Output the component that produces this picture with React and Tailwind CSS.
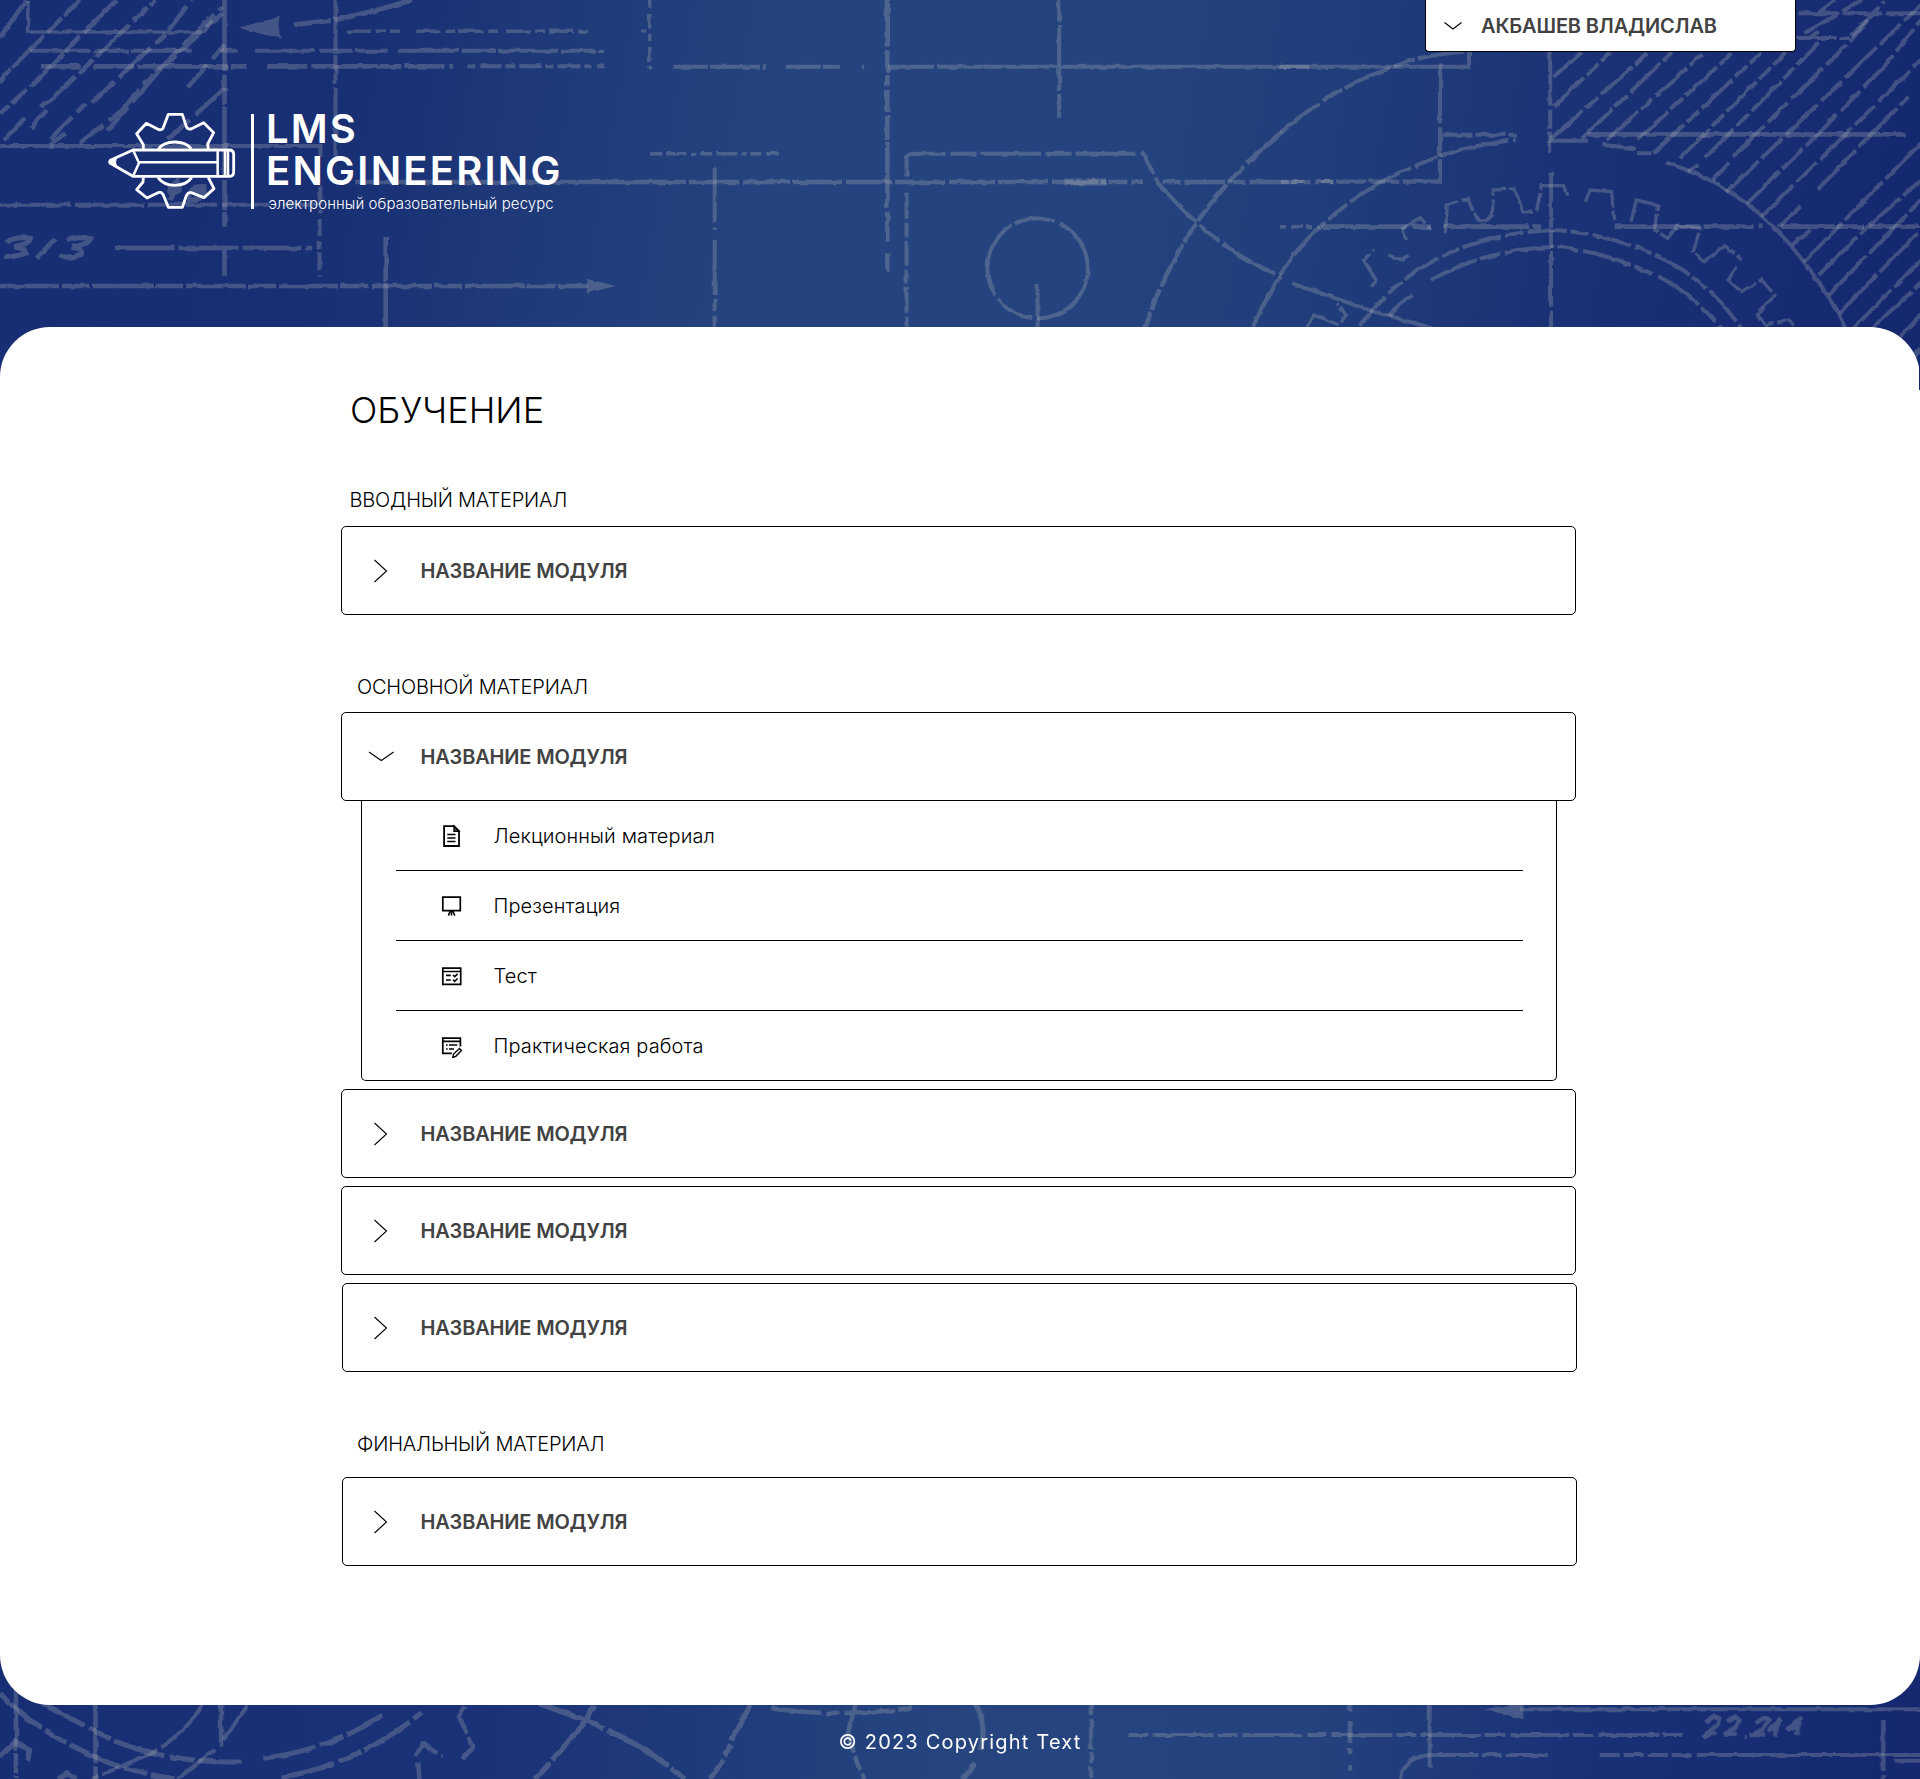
import React from "react";

function Line({ d, w = 4.6, dash }) {
  return (
    <path d={d} strokeWidth={w} strokeDasharray={dash} vectorEffect="non-scaling-stroke" />
  );
}

function Rough({ id }) {
  return (
    <filter id={id} x="-5%" y="-5%" width="110%" height="110%">
      <feTurbulence type="fractalNoise" baseFrequency="0.09" numOctaves="2" seed="4" />
      <feDisplacementMap in="SourceGraphic" scale="3.5" xChannelSelector="R" yChannelSelector="G" />
    </filter>
  );
}

function HeaderDrawing() {
  return (
    <svg className="absolute left-0 top-0" width="1920" height="390" viewBox="0 0 1920 390">
      <defs>
        <Rough id="rough-top" />
      </defs>
      <g filter="url(#rough-top)" fill="none" stroke="#b9bdb8" strokeOpacity="0.27">
        <g transform="scale(0.40816 0.33333)">
          <Line d="M65 0 L0 112 M30 205 L195 0 M0 245 L25 205 M285 0 L75 260 L0 340 M100 320 L130 295 L380 0 M75 385 L115 330" w={4.5} dash="46 5 20 4" />
          <Line d="M10 420 L60 355 M125 415 L210 310 M225 310 L410 95 L470 0 M120 435 L160 400 M265 390 L395 205 L545 40 M410 420 L550 265 M195 430 L300 330 L350 255 L545 20 M460 262 L550 135" w={4.5} dash="30 7 44 6 14 5" />
          <Line d="M68 0 V96 H500 L520 60" w={3.5} />
          <Line d="M75 152 H470 M540 152 H580 M625 152 H950 M975 152 H1480" w={4} dash="60 4 34 2" />
          <Line d="M100 199 H205 M230 199 H605 M655 199 H1110" dash="40 4 90 3" />
          <Line d="M1145 199 H1480" w={4} dash="8 5 22 4" />
          <Line d="M850 94 H980 M1020 94 H1220 M1240 94 H1450" w={3.5} dash="24 5 10 4" />
          <Line d="M1010 0 L920 32 L820 60 L720 74" w={5} dash="80 4" />
          <path d="M580 84 L685 50 L682 75 L690 116 Z" fill="#b9bdb8" fillOpacity="0.27" stroke="none" />
          <Line d="M550 0 V680" dash="70 4 30 2" />
          <Line d="M822 0 V470" w={4} dash="50 4 30 3" />
          <Line d="M0 438 H785 V470" w={4} />
          <Line d="M785 560 V640 M783 655 V830" w={4} dash="18 5 8 3" />
          <Line d="M870 546 H1570" dash="120 3 40 2" />
          <Line d="M0 614 H660 M690 614 H780" w={4} dash="70 4" />
          <Line d="M280 744 H765 M550 744 V830" dash="60 4" />
          <Line d="M0 858 H1440" w={4.5} dash="60 2 28 3" />
          <path d="M1438 836 L1508 858 L1438 880 Z" fill="#b9bdb8" fillOpacity="0.27" stroke="none" />
          <Line d="M945 708 V985" dash="45 2" />
          <Line d="M15 728 Q35 708 75 715 Q72 732 35 740 Q60 745 62 760 Q35 775 10 768 M135 715 L90 775 M165 722 Q185 708 222 716 Q215 735 175 742 Q205 745 200 762 Q170 778 145 768" w={5} />
          <Line d="M435 545 Q410 565 418 580 Q450 575 435 545 L415 600 M505 560 Q460 555 465 600 Q500 600 500 570 Q480 570 480 585" w={5} />
        </g>
        <g transform="translate(640 0) scale(0.40816 0.33333)">
          <Line d="M24 0 V200" w={3.5} dash="8 6 14 5" />
          <Line d="M24 200 H490 M545 200 h4" w={4} dash="3 20 35 2 50 3" />
          <Line d="M606 0 V140" w={5.5} />
          <Line d="M606 150 V260 M606 270 V420" dash="22 3 60 1" />
          <Line d="M606 425 V725 M606 760 V812" dash="66 4 30 2" />
          <Line d="M608 200 H1640" w={4} dash="46 3 1000" />
          <Line d="M1027 0 V355" w={4} dash="22 3 40 4" />
          <Line d="M0 93 H15" w={3} />
          <Line d="M25 461 H340" w={3.5} dash="12 4 20 5 5 4" />
          <Line d="M0 546 H1145" dash="46 3 50 4" />
          <Line d="M1040 546 H1145" w={7} />
          <Line d="M1150 546 H1230 M1280 546 H1700" w={4.5} dash="18 4 40 3" />
          <Line d="M183 505 V690 M183 720 V985" w={4} dash="55 4 12 4" />
          <Line d="M653 530 V470 Q655 461 680 461 H1235 Q1245 490 1270 550 Q1350 660 1400 705 Q1480 785 1570 828" w={4} dash="60 5 26 4" />
          <Line d="M653 578 V985" w={4} dash="26 4 14 3" />
          <ellipse cx="974" cy="805" rx="123" ry="150" strokeWidth="3.8" strokeDasharray="80 4 40 5" vectorEffect="non-scaling-stroke" />
          <Line d="M974 852 V985" w={4} />
          <Line d="M1570 398 Q1490 480 1440 550 Q1390 620 1360 675 Q1280 820 1238 985" w={4.5} dash="46 4 22 3" />
          <Line d="M1570 830 Q1530 900 1502 980" w={4} />
        </g>
        <g transform="translate(1280 0) scale(0.40816 0.33333)">
          <Line d="M0 200 H463 V155" w={4} />
          <Line d="M0 400 Q130 260 290 195 Q350 165 450 155" w={4} dash="50 4 22 3" />
          <Line d="M392 190 V545 H140 M0 546 H60 M100 546 H130" w={4.2} dash="60 4 30 2" />
          <Line d="M398 404 H580" w={4} dash="30 3" />
          <Line d="M0 825 Q70 680 240 550 Q320 500 400 465 Q490 430 580 420 M660 422 H755 M790 435 Q850 442 870 445 M875 460 H910" w={4} dash="70 4 24 4" />
          <Line d="M945 487 Q1050 530 1100 575 Q1200 650 1280 780 Q1350 890 1385 985" w={4} />
          <Line d="M662 155 V460 M664 515 V985" w={4} dash="55 4 18 3" />
          <Line d="M755 403 H1530" />
          <Line d="M0 680 H100" w={3.5} dash="6 5 12 4" />
          <Line d="M105 680 H370 M400 680 H640 M820 680 H1180 M1225 680 H1570" dash="85 4 50 4" />
          <Line d="M30 850 L230 935 L375 985" w={4} />
          <Line d="M195 980 Q270 850 380 780 Q500 700 670 690 Q820 700 960 790 Q1060 860 1130 985" w={4} dash="40 4 18 4" />
          <Line d="M265 950 Q290 910 325 885 M370 840 Q500 750 670 740 Q800 750 960 850 Q1040 920 1080 985" w={4} dash="50 4 20 5" />
          <Line d="M65 980 L85 945 L145 975 L162 945 L140 912 M225 860 L235 840 L205 780 L230 750 M265 765 L300 780 L315 765 M310 720 L300 685 L345 655 L370 690 M405 700 L410 615 L460 597 L485 660 Q505 670 520 645 L523 570 L575 567 L595 635 Q615 645 630 625 L640 557 H695 L703 590" w={3.4} dash="40 4 18 3" />
          <Line d="M748 605 L760 570 L812 575 L820 660 M860 665 L873 600 L925 615 L918 690 L950 715 L975 675 L1030 685 L1012 755 L1040 785 L1090 738 L1130 778 M1120 800 L1098 840 L1130 875 L1180 840 L1212 885 L1170 945 L1190 978 L1245 957 L1265 985" w={3.4} dash="50 3 20 3" />
          <Line d="M1270 40 H1570 M1265 114 H1395 M1320 38 L1360 0 M1400 108 L1480 5 M1285 100 L1425 0 M1300 110 L1320 95" w={4} dash="40 4" />
          <Line d="M670 230 L740 157 M670 320 L810 157 M665 415 L865 200 L900 157 M740 415 L960 157 M800 420 L1040 157 M875 420 L1110 157 M915 460 L1180 157 M980 475 L1240 157 M1040 475 L1320 130" w={4} dash="42 4 16 4" />
          <Line d="M1000 515 L1025 495 M1060 540 L1100 490 M1110 470 L1400 120 L1440 60 M1095 575 L1430 180 L1570 15 M1145 610 L1320 400 L1480 200 L1570 60 M1180 650 L1330 470 L1570 180" w={4} dash="44 5 28 5" />
          <Line d="M1220 680 L1275 620 M1320 565 L1540 290 M1255 735 L1300 690 M1285 785 L1400 640 L1570 430 M1320 825 L1440 680 L1570 540 M1345 885 L1570 600 M1370 940 L1570 690 M1405 985 L1570 780 M1450 985 L1570 850 M1520 1010 L1570 945" w={4} dash="54 4" />
          <Line d="M1555 1065 L1570 1045" />
        </g>
      </g>
    </svg>
  );
}

function FooterDrawing() {
  return (
    <svg className="absolute left-0 top-0" width="1920" height="139" viewBox="0 0 1920 139">
      <defs>
        <Rough id="rough-bottom" />
      </defs>
      <g filter="url(#rough-bottom)" fill="none" stroke="#b9bdb8" strokeOpacity="0.27">
        <g transform="scale(0.61224 0.33333)">
          <Line d="M0 160 Q60 280 180 370 Q230 400 285 417 M60 180 Q150 270 190 305 Q280 370 395 366 M430 355 Q540 330 625 225 M460 412 Q590 370 690 215" w={5} dash="54 5 24 4" />
          <Line d="M26 150 V417 M156 190 V417 M361 190 V320" w={4.5} dash="60 3 20 3" />
          <Line d="M330 195 Q300 290 240 345 L150 417 M405 195 L365 300 M350 330 L290 417" w={4} dash="60 4" />
          <Line d="M0 350 L25 305 L48 330 L45 360 M95 417 L110 400 L125 417" w={5.5} />
          <Line d="M760 200 L750 230 L772 320 L755 360 M680 345 L690 312 L722 348 M683 365 L685 417" w={4.5} dash="30 4" />
          <Line d="M880 190 L955 240 Q1050 310 1118 417 M972 195 L950 260 L875 417" w={5.5} dash="70 4" />
          <Line d="M1225 195 L1200 280 L1185 350 L1160 417" w={5} dash="40 4 14 3" />
          <Line d="M1260 205 Q1340 225 1400 217 Q1460 215 1495 200 M1397 195 L1385 280 L1400 370 L1412 417" w={4.5} dash="50 4 14 5" />
        </g>
        <g transform="translate(960 0) scale(0.61224 0.33333)">
          <Line d="M25 190 Q45 260 33 330 M25 370 L5 417" w={5} />
          <Line d="M214 195 V417" w={4} dash="10 4 30 3" />
          <Line d="M275 285 H1185" w={4} dash="20 5 60 4" />
          <Line d="M637 195 V392" w={4.5} dash="6 10 22 5" />
          <Line d="M767 195 V385" w={4} />
          <Line d="M915 208 H1570" w={4} />
          <path d="M857 208 L920 188 V238 Z" fill="#b9bdb8" fillOpacity="0.27" stroke="none" />
          <Line d="M720 417 Q725 345 775 345 H960" w={4} dash="90 3 20 4" />
          <Line d="M1045 345 H1205" w={4} dash="20 4" />
          <Line d="M1205 345 H1570 M1525 362 H1570" w={4} />
          <Line d="M1508 240 V417" w={4.5} dash="50 5" />
          <Line d="M1218 245 Q1230 222 1240 235 Q1238 260 1213 290 L1235 278 M1253 245 Q1265 225 1273 238 Q1270 262 1248 288 L1270 280 M1282 290 h3 M1300 250 Q1315 225 1322 240 Q1315 262 1292 290 L1315 280 M1320 275 L1340 235 L1325 270 L1335 250 L1332 290 M1350 270 L1375 232 L1352 268 L1370 255 L1365 285" w={4.5} />
        </g>
      </g>
    </svg>
  );
}

function Emblem() {
  return (
    <svg width="134" height="100" viewBox="50 60 402 300" fill="none" stroke="#fff" strokeWidth="8.5" strokeLinejoin="round">
      <path d="M159 177 V164 L139 131 L168 100 L206 119 Q214 120 218 115 L234 73 H276 L288 110 Q292 119 302 117 L340 98 L370 128 L352 162 L354 177" />
      <path d="M159 263 L158 276 L139 299 L170 324 L206 307 Q214 306 218 313 L234 352 H276 L288 317 Q293 306 303 308 L341 323 L371 296 L354 263" />
      <path d="M204 177 Q220 156 253 156 Q288 156 303 177 M203 263 Q220 286 253 286 Q288 286 304 263" />
      <path d="M128 180 H416 Q430 180 430 193 V246 Q430 259 416 259 H128 L60 220 Q56 216 60 211 Z" />
      <path d="M128 180 L146 219 L128 259 M146 217 H382 M382 180 V259 M404 180 V259 M413 180 V259" strokeWidth="7.5" />
      <path d="M58 215 L78 205 Q73 217 79 230 Z" fill="#fff" strokeWidth="3" />
    </svg>
  );
}

function ChevronRight() {
  return (
    <svg width="26" height="24" viewBox="0 0 26 24" fill="none" stroke="#000" strokeWidth="1.1">
      <path d="M6.5 1 L18.5 12 L6.5 23" />
    </svg>
  );
}

function ChevronDown() {
  return (
    <svg width="26" height="24" viewBox="0 0 26 24" fill="none" stroke="#000" strokeWidth="1.1">
      <path d="M1 7 L13.3 15.5 L25.6 7" />
    </svg>
  );
}

const iconProps = {
  width: 24,
  height: 24,
  viewBox: "0 0 24 24",
  fill: "none",
  stroke: "#000",
};

function DocumentIcon() {
  return (
    <svg {...iconProps} strokeWidth="1.8">
      <path d="M4.1 2.2 H14 L19 7.2 V22 H4.1 Z" />
      <path d="M14 2.2 V7.2 H19 Z" fill="#000" fillOpacity="0.55" strokeWidth="1.4" />
      <path d="M7.3 10.5 H15.5 M7.3 14 H15.5 M7.3 17.5 H15.5" strokeWidth="1.6" />
    </svg>
  );
}

function BoardIcon() {
  return (
    <svg {...iconProps} strokeWidth="1.7">
      <path d="M2.8 3.2 H20.3 V16.6 H2.8 Z" />
      <path d="M10.2 17 L8.4 21.6 M12.8 17 L14.8 21.6 M11.5 17 V21.6" strokeWidth="1.6" />
    </svg>
  );
}

function TestIcon() {
  return (
    <svg {...iconProps} strokeWidth="1.7">
      <path d="M2.8 4.2 H20.7 V20.3 H2.8 Z M2.8 7.5 H20.7" />
      <path d="M6 11.4 H10.8 M6 16 H10.8 M13 11 L14.7 12.6 L17.6 9.8 M13 15.7 L14.7 17.4 L17.6 14.5" strokeWidth="1.6" />
    </svg>
  );
}

function PracticeIcon() {
  return (
    <svg {...iconProps} strokeWidth="1.7">
      <path d="M20.4 12.5 V4.2 H2.8 V19.3 H11.8 M2.8 7.4 H20.4" />
      <path d="M6 11.1 H7.6 M9 11.1 H17.3 M6 14.9 H7.6 M9 14.9 H14" strokeWidth="1.5" />
      <path d="M12.8 23.5 L13.5 20 L19.5 14.5 L21.4 16.6 L15.8 22.3 Z" strokeWidth="1.4" />
    </svg>
  );
}

function ModuleBox({ open = false, shifted = false, className = "" }) {
  return (
    <div
      className={`flex h-[89px] w-[1235px] items-center rounded-[5px] border border-black bg-white ${
        shifted ? "ml-px pl-[25px]" : "pl-[26px]"
      } ${className}`}
    >
      <span className="flex w-[26px]">{open ? <ChevronDown /> : <ChevronRight />}</span>
      <span className="ml-[26.5px] text-[20px] font-semibold leading-6 tracking-[-0.17px] text-[#424242]">НАЗВАНИЕ МОДУЛЯ</span>
    </div>
  );
}

function SectionTitle({ children, className = "" }) {
  return (
    <h2 className={`text-[20px] font-light leading-6 tracking-[-0.2px] text-black ${className}`}>{children}</h2>
  );
}

const lessons = [
  { label: "Лекционный материал", Icon: DocumentIcon },
  { label: "Презентация", Icon: BoardIcon },
  { label: "Тест", Icon: TestIcon },
  { label: "Практическая работа", Icon: PracticeIcon },
];

function LessonList() {
  return (
    <ul className="ml-[20px] h-[280px] w-[1196px] rounded-b-[5px] border border-t-0 border-black pl-[34px] pr-[33px]">
      {lessons.map(({ label, Icon }, i) => (
        <li
          key={label}
          className={`flex items-center pl-[44px] ${i < lessons.length - 1 ? "h-[70px] border-b border-black" : "h-[69px]"}`}
        >
          <Icon />
          <span className="ml-[29.5px] text-[20px] font-light leading-6 tracking-[0.12px] text-black">{label}</span>
        </li>
      ))}
    </ul>
  );
}

export default function App() {
  return (
    <div className="relative flex h-[1779px] w-[1920px] flex-col overflow-hidden bg-[#182e74] font-['Inter',sans-serif]">
      <header className="relative h-[327px] bg-[#1b3276]">
        <div className="absolute left-0 top-0 h-[390px] w-full bg-[linear-gradient(100deg,#182e74_0%,#182f74_18%,#203b7a_30%,#25437f_40%,#25437f_58%,#213d7b_68%,#1a3175_82%,#14276f_100%)]" />
        <HeaderDrawing />
        <div className="relative flex justify-end pr-[124px]">
          <button className="flex h-[52px] w-[371px] items-center rounded-b-[4px] border border-t-0 border-black bg-white">
            <svg className="ml-[18px]" width="18" height="10" viewBox="0 0 18 10" fill="none" stroke="#000" strokeWidth="1.1">
              <path d="M0.5 1.5 L9 8 L17.5 1.5" />
            </svg>
            <span className="ml-[19px] text-[20px] font-semibold leading-6 tracking-[-0.15px] text-[#424242]">АКБАШЕВ ВЛАДИСЛАВ</span>
          </button>
        </div>
        <div className="relative ml-[107px] mt-[58px] flex">
          <Emblem />
          <div className="ml-[10px] mt-1 h-[95px] w-[3px] bg-white" />
          <div className="ml-[12px] text-white">
            <p className="mt-[-2px] text-[40px] font-semibold leading-[42px] tracking-[2.1px]">LMS</p>
            <p className="text-[40px] font-semibold leading-[42px] tracking-[2.25px]">ENGINEERING</p>
            <p className="ml-[2.5px] mt-[3px] text-[15px] font-light leading-[18px] tracking-[0.08px]">электронный образовательный ресурс</p>
          </div>
        </div>
      </header>

      <div className="relative flex-1">
        <div className="absolute bottom-0 left-0 h-[139px] w-full bg-[linear-gradient(92deg,#182e74_0%,#1a3277_25%,#26457f_50%,#25427e_68%,#1a3177_82%,#15286f_100%)]" />
        <div className="absolute bottom-0 left-0 h-[139px] w-full">
          <FooterDrawing />
        </div>
        <main className="relative h-[1378px] rounded-[50px] bg-white pl-[341px] pt-[61px]">
          <div className="absolute right-0 top-[40px] h-[23px] w-px bg-[#14276f]" />
          <h1 className="ml-[9px] text-[36px] font-light leading-[44px] text-black">ОБУЧЕНИЕ</h1>
          <SectionTitle className="ml-[8.5px] mt-[56px]">ВВОДНЫЙ МАТЕРИАЛ</SectionTitle>
          <ModuleBox className="mt-[14px]" />
          <SectionTitle className="ml-[16px] mt-[60px]">ОСНОВНОЙ МАТЕРИАЛ</SectionTitle>
          <ModuleBox open className="mt-[13px]" />
          <LessonList />
          <ModuleBox className="mt-2" />
          <ModuleBox className="mt-2" />
          <ModuleBox shifted className="mt-2" />
          <SectionTitle className="ml-[16px] mt-[60px]">ФИНАЛЬНЫЙ МАТЕРИАЛ</SectionTitle>
          <ModuleBox shifted className="mt-[21px]" />
        </main>
        <footer className="relative flex h-[74px] items-center justify-center text-[20px] leading-6 tracking-[1.2px] text-white">
          © 2023 Copyright Text
        </footer>
      </div>
    </div>
  );
}
